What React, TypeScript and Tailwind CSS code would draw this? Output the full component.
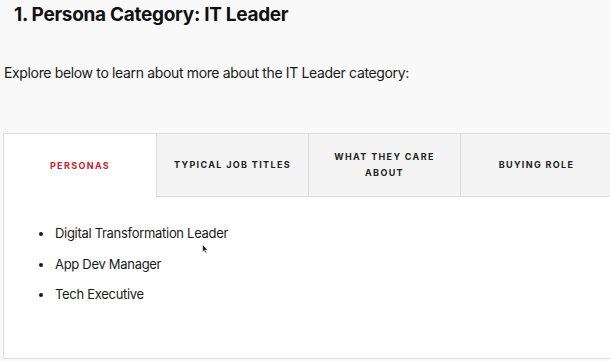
import React from "react";

const tabs = ["Personas", "Typical Job Titles", "What They Care About", "Buying Role"];
const personas = ["Digital Transformation Leader", "App Dev Manager", "Tech Executive"];

export default function App() {
  const active = 0;
  return (
    <div
      className="relative h-[361px] w-[610px] overflow-hidden bg-[#f9f9f9] text-[#1a1a1a]"
      style={{ fontFamily: "Inter, 'Noto Sans', sans-serif" }}
    >
      <h1 className="pl-[14px] pt-[2px] text-[19px] font-bold leading-[26px] tracking-[-0.3px] text-[#111]">
        1. Persona Category: IT Leader
      </h1>
      <p className="mt-[35px] pl-[4px] text-[14px] leading-[20px] tracking-[-0.35px]">
        Explore below to learn about more about the IT Leader category:
      </p>

      <div className="ml-[3px] mt-[50px] h-[226px] w-[640px] border border-[#dddddd] bg-white">
        <div className="flex h-[63px]">
          {tabs.map((t, i) => (
            <div
              key={t}
              className={
                "flex w-[152px] shrink-0 items-center justify-center px-[10px] text-center text-[9px] font-bold uppercase leading-[16px] tracking-[0.15em] " +
                (i === active
                  ? "bg-white text-[#c8202e]"
                  : "border-b border-l border-[#dddddd] bg-[#f4f4f4] text-[#222]")
              }
            >
              <span className={i === 2 ? "max-w-[110px]" : ""}>{t}</span>
            </div>
          ))}
          <div className="flex-1 border-b border-[#dddddd] bg-[#f4f4f4]" />
        </div>
        <ul className="mt-[26px] list-disc pl-[50px] text-[13px] leading-[20px] tracking-[-0.3px]">
          {personas.map((p) => (
            <li key={p} className="mb-[10.5px] pl-[1px]">
              {p}
            </li>
          ))}
        </ul>
      </div>

      <svg className="absolute left-[202px] top-[244px]" width="7" height="10" viewBox="0 0 7 10">
        <path d="M0.5 0.5 L0.5 8 L2.3 6.4 L3.6 9.3 L4.7 8.8 L3.5 6 L6 6 Z" fill="#222" stroke="#fff" strokeWidth="0.6" />
      </svg>
    </div>
  );
}
